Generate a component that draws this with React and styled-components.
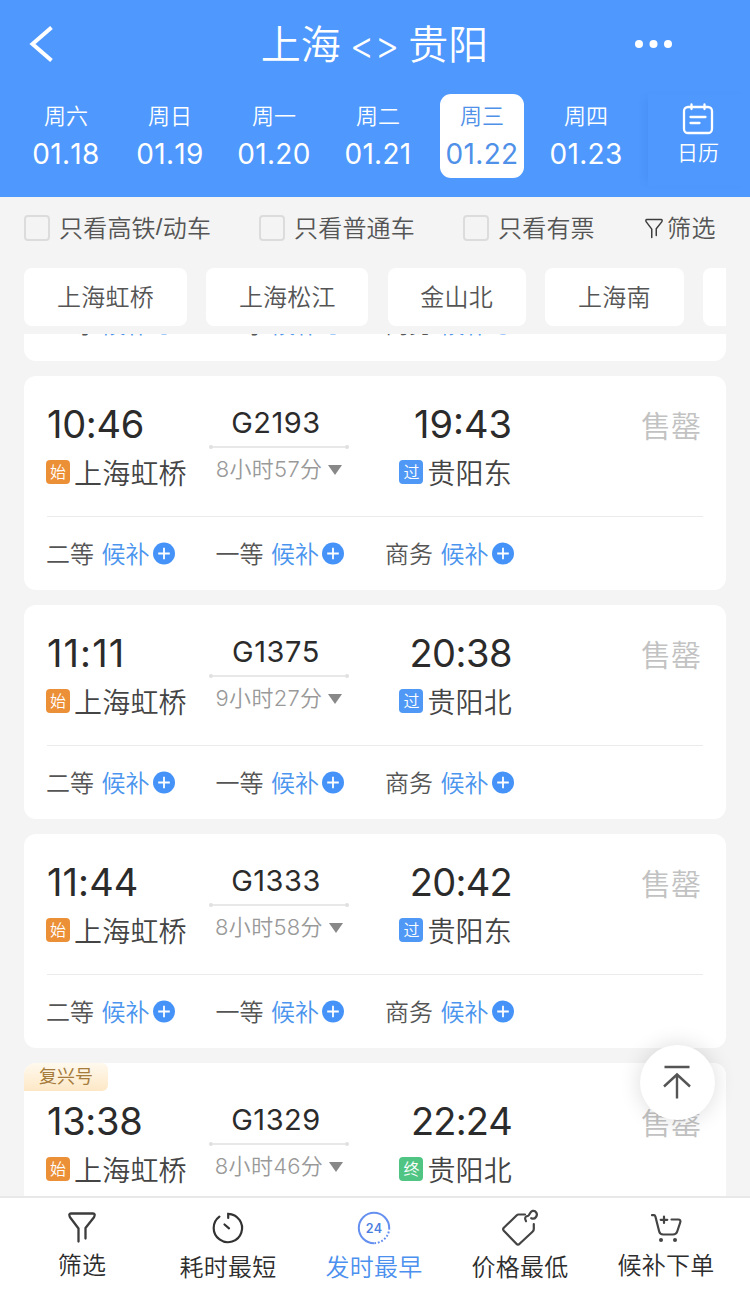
import React from "react";
import styled, { createGlobalStyle } from "styled-components";

const GlobalStyle = createGlobalStyle`
  * { box-sizing: border-box; }
  body {
    margin: 0;
    background: #f4f4f4;
    font-family: Inter, "Noto Sans CJK SC", sans-serif;
    font-weight: 400;
    color: #333;
  }
`;

const cjk = `font-family: "Noto Sans CJK SC", sans-serif; font-weight: 350;`;

const Screen = styled.div`
  width: 750px;
  height: 1294px;
  display: flex;
  flex-direction: column;
  overflow: hidden;
  position: relative;
`;

const Header = styled.header`
  height: 197px;
  flex: none;
  background: #4f98fd;
  color: #fff;
`;

const TitleBar = styled.div`
  height: 94px;
  padding: 0 77px 6px 29px;
  display: grid;
  grid-template-columns: 60px 1fr 13px;
  align-items: center;
`;

const Title = styled.h1`
  margin: 0 0 1px;
  ${cjk}
  font-size: 40px;
  line-height: 60px;
  display: flex;
  justify-content: center;
  gap: 9px;
`;

const Arrows = styled.span`
  font-family: Inter, sans-serif;
  font-weight: 350;
  font-size: 38px;
  font-feature-settings: "calt" 0;
  padding-top: 3px;
`;

const MoreIcon = styled.svg`
  margin-left: -26px;
`;

const DateBar = styled.div`
  display: flex;
  padding-left: 24px;
`;

const DateCell = styled.div`
  width: 84px;
  height: 84px;
  margin-right: 20px;
  flex: none;
  border-radius: 11px;
  display: flex;
  flex-direction: column;
  align-items: center;
  background: ${(p) => (p.$active ? "#fff" : "transparent")};
  color: ${(p) => (p.$active ? "#4f90e8" : "#fff")};
`;

const WeekDay = styled.span`
  ${cjk}
  font-size: 22px;
  line-height: 32px;
  margin-top: 4px;
`;

const DayNumber = styled.span`
  font-size: 28px;
  line-height: 34px;
  margin-top: 7px;
  letter-spacing: 0.3px;
  font-kerning: none;
`;

const CalendarButton = styled.div`
  flex: 1;
  height: 92px;
  display: flex;
  flex-direction: column;
  align-items: center;
  padding: 9px 2px 0 0;
  box-shadow: -6px 0 8px -5px rgba(40, 100, 210, 0.2);
  font-size: 21px;
  line-height: 31px;
  ${cjk}
`;

const FilterBar = styled.div`
  height: 71px;
  flex: none;
  display: flex;
  padding: 12px 24px 0;
`;

const CheckOption = styled.label`
  height: 38px;
  display: flex;
  align-items: center;
  gap: 9px;
  width: ${(p) => p.$width}px;
  ${cjk}
  font-size: 24px;
  letter-spacing: 0.2px;
  color: #555;
  white-space: nowrap;
`;

const OptionText = styled.span`
  line-height: 36px;
  margin-bottom: 2px;
  display: flex;
`;

const Slash = styled.span`
  font-family: "Liberation Sans", sans-serif;
`;

const CheckBox = styled.span`
  width: 26px;
  height: 26px;
  border: 2px solid #dcdcdc;
  border-radius: 4px;
  flex: none;
`;

const FilterButton = styled(CheckOption)`
  gap: 4px;
  width: auto;
  letter-spacing: 0.6px;
`;

const StationBar = styled.div`
  height: 66px;
  flex: none;
  margin: 0 24px;
  display: flex;
  gap: 19.3px;
  overflow: hidden;
`;

const StationChip = styled.span`
  width: ${(p) => p.$width}px;
  height: 58px;
  flex: none;
  border-radius: 8px;
  background: #fff;
  text-align: center;
  ${cjk}
  font-size: 24px;
  line-height: 55px;
  letter-spacing: 0.2px;
  color: #555;
`;

const TrainList = styled.main`
  flex: 1;
  min-height: 0;
  overflow: hidden;
  padding: 0 24px;
`;

const Card = styled.article`
  height: 214px;
  background: #fff;
  border-radius: 12px;
  padding: 0 23px;
  margin-top: 15px;
`;

const PassedCard = styled.article`
  height: 28px;
  margin-top: -1px;
  background: #fff;
  border-radius: 0 0 12px 12px;
  padding: 0 23px 1px;
  overflow: hidden;
  display: flex;
  align-items: flex-end;
`;

const TripRow = styled.div`
  height: 140px;
  padding-top: ${(p) => (p.$tagged ? 0 : 24)}px;
  display: grid;
  grid-template-columns: 162px 190px 113px 1fr;
`;

const Divider = styled.div`
  height: 1px;
  background: #ebebeb;
`;

const Depart = styled.div``;

const Arrive = styled.div`
  display: flex;
  flex-direction: column;
  align-items: flex-end;
`;

const Time = styled.div`
  font-size: 38px;
  line-height: 48px;
  letter-spacing: ${(p) => p.$tracking ?? -0.3}px;
  font-kerning: none;
  color: #2b2b2b;
`;

const Station = styled.div`
  ${cjk}
  font-size: 28px;
  line-height: 44px;
  height: 48px;
  color: #444;
  display: flex;
  align-items: center;
  margin-left: -1px;
  white-space: nowrap;
`;

const StationName = styled.span`
  margin: 0 0 1px 4px;
  letter-spacing: 0.2px;
`;

const badgeColors = { 始: "#ec9038", 过: "#4f98f5", 终: "#4fc483" };

const Badge = styled.span`
  width: 24px;
  height: 24px;
  border-radius: 4px;
  background: ${(p) => badgeColors[p.children]};
  color: #fff;
  font-size: 16px;
  line-height: 23px;
  text-align: center;
`;

const TrainInfo = styled.div`
  width: 140px;
  display: flex;
  flex-direction: column;
  align-items: center;
`;

const TrainNo = styled.div`
  font-size: 29px;
  line-height: 46px;
  letter-spacing: 0.5px;
  font-kerning: none;
  color: #2b2b2b;
  margin-left: -6px;
`;

const TrackLine = styled.div`
  width: 140px;
  height: 4px;
  margin-top: -1px;
  display: flex;
  align-items: center;
  &::before, &::after {
    content: "";
    width: 4px;
    height: 4px;
    border-radius: 2px;
    background: #e0e0e0;
  }
`;

const TrackBar = styled.span`
  flex: 1;
  height: 2px;
  background: #e8e8e8;
`;

const Duration = styled.div`
  display: flex;
  align-items: center;
  gap: 6px;
  font-family: Inter, "Noto Sans CJK SC", sans-serif;
  font-weight: 350;
  font-size: 22px;
  line-height: 41px;
  letter-spacing: 0.3px;
  color: #999;
  white-space: nowrap;
`;

const SoldOut = styled.div`
  text-align: right;
  ${cjk}
  font-size: 30px;
  line-height: 48px;
  padding-right: 2px;
  color: #c2c2c2;
`;

const SeatRow = styled.div`
  height: 73px;
  flex: none;
  display: flex;
  margin-left: -1px;
`;

const Seat = styled.div`
  width: 169.5px;
  height: 73px;
  display: flex;
  align-items: center;
  ${cjk}
  font-size: 24px;
  line-height: 36px;
  color: #555;
`;

const SeatLabel = styled.span`
  margin-bottom: 2px;
`;

const Waitlist = styled.span`
  color: #4b95ee;
  margin: 0 2px 2px 7.5px;
`;

const SeriesTag = styled.div`
  width: 84px;
  height: 28px;
  margin-left: -23px;
  border-radius: 12px 6px 6px 0;
  background: linear-gradient(#fff9ee, #fde8c6);
  color: #a67c3c;
  text-align: center;
  font-family: "Noto Sans CJK SC", sans-serif;
  font-size: 18px;
  line-height: 25px;
  margin-bottom: 6px;
`;

const TopButton = styled.button`
  position: absolute;
  left: 640px;
  top: 1045px;
  width: 75px;
  height: 75px;
  border: 0;
  padding: 0 1px 2px 0;
  border-radius: 50%;
  background: #fff;
  box-shadow: 0 0 22px rgba(0, 0, 0, 0.14);
  display: flex;
  align-items: center;
  justify-content: center;
`;

const TabBar = styled.nav`
  height: 98px;
  flex: none;
  background: #fff;
  border-top: 2px solid #e8e8e8;
  padding: 0 11px 0 9px;
  display: flex;
  position: relative;
`;

const Tab = styled.div`
  flex: 1;
  display: flex;
  flex-direction: column;
  align-items: center;
  padding-top: ${(p) => (p.$raised ? 11 : 9)}px;
  ${cjk}
  font-size: 24px;
  line-height: 36px;
  letter-spacing: 0.3px;
  color: ${(p) => (p.$active ? "#4b90ee" : "#2d2d2d")};
`;

const TabIcon = styled.span`
  height: ${(p) => p.$height || 41}px;
  display: flex;
  align-items: center;
`;

const FunnelIcon = ({ width, height, stroke = "#3c3c3c" }) => (
  <svg width={width} height={height} viewBox="0 0 28 31" fill="none" stroke={stroke} strokeWidth="2.3" strokeLinejoin="round" strokeLinecap="round">
    <path d="M10.5 29.5V16.5L2 5.2Q.3 1.5 3 1.5H25Q27.7 1.5 26 5.2L17.5 16V26.5" />
  </svg>
);

const PlusDot = () => (
  <svg width="24" height="24" viewBox="0 0 24 24">
    <circle cx="12" cy="11.5" r="11" fill="#4593f8" />
    <path d="M12 5.7V17.3M6.2 11.5H17.8" stroke="#fff" strokeWidth="1.8" />
  </svg>
);

const TimerIcon = () => (
  <svg width="36" height="36" viewBox="0 0 36 36" fill="none" stroke="#333" strokeWidth="2.2" strokeLinecap="round">
    <path d="M18.2 8V3.8A14.2 14.2 0 1 1 9.4 6.6M14.5 14.5L19 18.3" />
  </svg>
);

const ClockText = styled.text`
  font: 600 12.5px Inter, sans-serif;
  fill: #4d7fe0;
`;

const Clock24Icon = () => (
  <svg width="36" height="36" viewBox="0 0 36 36" fill="none" stroke="#6590f0" strokeWidth="2">
    <path d="M18 33.2A15.2 15.2 0 1 1 33.2 18" />
    <path d="M33.2 18A15.2 15.2 0 0 1 18 33.2" strokeDasharray="1.8 1.8" />
    <ClockText x="18" y="22.5" textAnchor="middle" stroke="none">24</ClockText>
  </svg>
);

const TagIcon = () => (
  <svg width="38" height="38" viewBox="0 0 38 38" fill="none" stroke="#444" strokeWidth="2.2" strokeLinecap="round" strokeLinejoin="round">
    <path d="M24 5.5H17.5Q16.5 5.5 15.5 6.5L2.8 18.8Q1.5 20.3 2.8 21.8L15.4 34.8Q17 36.2 18.6 34.8L31.5 22.8Q32.8 21.6 32.8 20V15" />
    <path d="M25 12.2C23 9 24.5 7 27 6.8C29 6.5 28.5 2.6 31.5 1.9C34.8 1.2 37.2 5 35 8C33.6 10 31.8 10 30.2 9.2" />
  </svg>
);

const CartIcon = () => (
  <svg width="34" height="32" viewBox="0 0 34 32" fill="none" stroke="#444" strokeWidth="2.2" strokeLinecap="round" strokeLinejoin="round">
    <path d="M3 3.2H5Q6 3.2 6.4 4.5L10.2 19.5Q11 22.5 14.2 22.5H24Q27.2 22.5 28.2 19.5L31.2 10.5Q32.2 7.5 29.2 7.5H22.5M15 4.5V11M11.7 7.8H18.3" />
    <circle cx="12" cy="28" r="2" fill="#444" stroke="none" />
    <circle cx="26" cy="28" r="2" fill="#444" stroke="none" />
  </svg>
);

const CalendarIcon = () => (
  <svg width="34" height="33" viewBox="0 0 34 33" fill="none" stroke="#fff" strokeWidth="2.3" strokeLinecap="round">
    <rect x="3" y="4" width="28" height="26" rx="4" />
    <path d="M10.5 1.5V6M23.5 1.5V6M9.5 14H24.5M9.5 20H18.5" />
  </svg>
);

const dates = [
  ["周六", "01.18"],
  ["周日", "01.19"],
  ["周一", "01.20"],
  ["周二", "01.21"],
  ["周三", "01.22"],
  ["周四", "01.23"],
];

const seats = ["二等", "一等", "商务"];

const trains = [
  { from: "10:46", to: "19:43", no: "G2193", duration: "8小时57分", mark: "过", dest: "贵阳东", seats, toTracking: 0 },
  { from: "11:11", to: "20:38", no: "G1375", duration: "9小时27分", mark: "过", dest: "贵阳北", seats, fromTracking: 1.1, toTracking: -0.5 },
  { from: "11:44", to: "20:42", no: "G1333", duration: "8小时58分", mark: "过", dest: "贵阳东", seats, fromTracking: 0.1, toTracking: -0.7 },
  { from: "13:38", to: "22:24", no: "G1329", duration: "8小时46分", mark: "终", dest: "贵阳北", series: "复兴号", toTracking: -0.8 },
];

const Seats = ({ items }) => (
  <SeatRow>
    {items.map((seat) => (
      <Seat key={seat}>
        <SeatLabel>{seat}</SeatLabel>
        <Waitlist>候补</Waitlist>
        <PlusDot />
      </Seat>
    ))}
  </SeatRow>
);

const TrainCard = ({ train }) => (
  <Card>
    {train.series && <SeriesTag>{train.series}</SeriesTag>}
    <TripRow $tagged={!!train.series}>
      <Depart>
        <Time $tracking={train.fromTracking}>{train.from}</Time>
        <Station><Badge>始</Badge><StationName>上海虹桥</StationName></Station>
      </Depart>
      <TrainInfo>
        <TrainNo>{train.no}</TrainNo>
        <TrackLine><TrackBar /></TrackLine>
        <Duration>
          {train.duration}
          <svg width="14" height="10" viewBox="0 0 14 10"><path d="M0 0H14L7 10Z" fill="#888" /></svg>
        </Duration>
      </TrainInfo>
      <Arrive>
        <Time $tracking={train.toTracking}>{train.to}</Time>
        <Station><Badge>{train.mark}</Badge><StationName>{train.dest}</StationName></Station>
      </Arrive>
      <SoldOut>售罄</SoldOut>
    </TripRow>
    {train.seats && <><Divider /><Seats items={train.seats} /></>}
  </Card>
);

export default function App() {
  return (
    <Screen>
      <GlobalStyle />
      <Header>
        <TitleBar>
          <svg width="26" height="36" viewBox="0 0 26 36" fill="none" stroke="#fff" strokeWidth="4">
            <path d="M22.5 1.5L3.5 18L22.5 34.5" />
          </svg>
          <Title><span>上海</span><Arrows>&lt;&gt;</Arrows><span>贵阳</span></Title>
          <MoreIcon width="40" height="10" viewBox="0 0 40 10" fill="#fff">
            <circle cx="5" cy="5" r="4" /><circle cx="19.5" cy="5" r="4" /><circle cx="34" cy="5" r="4" />
          </MoreIcon>
        </TitleBar>
        <DateBar>
          {dates.map(([week, day]) => (
            <DateCell key={day} $active={day === "01.22"}>
              <WeekDay>{week}</WeekDay>
              <DayNumber>{day}</DayNumber>
            </DateCell>
          ))}
          <CalendarButton><CalendarIcon />日历</CalendarButton>
        </DateBar>
      </Header>
      <FilterBar>
        <CheckOption $width={235}><CheckBox /><OptionText>只看高铁<Slash>/</Slash>动车</OptionText></CheckOption>
        <CheckOption $width={204}><CheckBox /><OptionText>只看普通车</OptionText></CheckOption>
        <CheckOption $width={182}><CheckBox /><OptionText>只看有票</OptionText></CheckOption>
        <FilterButton><FunnelIcon width={18} height={21} /><OptionText>筛选</OptionText></FilterButton>
      </FilterBar>
      <StationBar>
        <StationChip $width={163}>上海虹桥</StationChip>
        <StationChip $width={162}>上海松江</StationChip>
        <StationChip $width={138}>金山北</StationChip>
        <StationChip $width={139}>上海南</StationChip>
        <StationChip $width={139} />
      </StationBar>
      <TrainList>
        <PassedCard><Seats items={seats} /></PassedCard>
        {trains.map((t) => <TrainCard key={t.no} train={t} />)}
      </TrainList>
      <TopButton aria-label="返回顶部">
        <svg width="30" height="36" viewBox="0 0 30 36" fill="none" stroke="#555" strokeWidth="2.4">
          <path d="M2.5 3H27.5M15 34.5V11M2 22.5L15 10.5L28 22.5" />
        </svg>
      </TopButton>
      <TabBar>
        <Tab $raised><TabIcon $height={37}><FunnelIcon width={28} height={31} /></TabIcon>筛选</Tab>
        <Tab><TabIcon><TimerIcon /></TabIcon>耗时最短</Tab>
        <Tab $active><TabIcon><Clock24Icon /></TabIcon>发时最早</Tab>
        <Tab><TabIcon><TagIcon /></TabIcon>价格最低</Tab>
        <Tab $raised><TabIcon $height={37}><CartIcon /></TabIcon>候补下单</Tab>
      </TabBar>
    </Screen>
  );
}
